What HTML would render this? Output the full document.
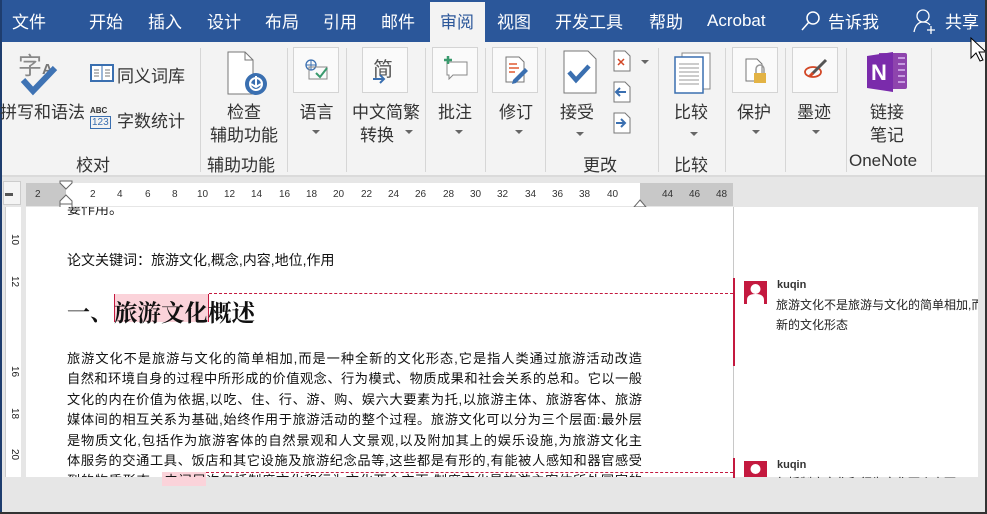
<!DOCTYPE html>
<html><head><meta charset="utf-8"><style>
*{margin:0;padding:0;box-sizing:border-box}
body{width:987px;height:514px;overflow:hidden;position:relative;background:#e6e6e6;font-family:"Liberation Sans","Noto Sans CJK SC",sans-serif;color:#222}
.a{position:absolute;white-space:nowrap}
.tab{position:absolute;top:8px;font-size:17px;color:#fff}
.rl{position:absolute;font-size:17px;color:#333;text-align:center}
.sep{position:absolute;top:48px;width:1px;height:124px;background:#d6d6d6}
.box{position:absolute;top:47px;width:46px;height:46px;border:1px solid #d4d4d4;background:#fafafa}
.dd{position:absolute;width:0;height:0;border-left:4px solid transparent;border-right:4px solid transparent;border-top:4px solid #666}
.gl{position:absolute;top:151px;font-size:17px;color:#333}
.ln{position:absolute;left:67px;width:575px;font-size:13.2px;text-align:justify;text-align-last:justify;white-space:nowrap;color:#111}
.rn{position:absolute;font-size:10px;color:#333}
</style></head><body>
<div class="a" style="left:0;top:0;width:987px;height:42px;background:#2b579a"></div>
<div class="a" style="left:0;top:0;width:2px;height:514px;background:#1e3d6e"></div>
<div class="a" style="left:430px;top:2px;width:55px;height:40px;background:#f3f3f3"></div>
<div class="tab" style="left:12px">文件</div>
<div class="tab" style="left:89px">开始</div>
<div class="tab" style="left:148px">插入</div>
<div class="tab" style="left:207px">设计</div>
<div class="tab" style="left:265px">布局</div>
<div class="tab" style="left:323px">引用</div>
<div class="tab" style="left:381px">邮件</div>
<div class="tab" style="left:440px;color:#2b579a">审阅</div>
<div class="tab" style="left:497px">视图</div>
<div class="tab" style="left:555px">开发工具</div>
<div class="tab" style="left:649px">帮助</div>
<div class="tab" style="left:707px;top:11px">Acrobat</div>
<svg class="a" style="left:800px;top:10px" width="22" height="22"><circle cx="13" cy="8" r="6" fill="none" stroke="#fff" stroke-width="1.5"/><line x1="9" y1="12" x2="2" y2="20" stroke="#fff" stroke-width="1.5"/></svg>
<div class="tab" style="left:828px">告诉我</div>
<svg class="a" style="left:913px;top:8px" width="24" height="26"><circle cx="10" cy="8" r="6" fill="none" stroke="#fff" stroke-width="1.3"/><path d="M1 24 Q3 14 10 14 Q15 14 17 17" fill="none" stroke="#fff" stroke-width="1.3"/><path d="M18 18v8M14 22h8" stroke="#fff" stroke-width="1.3"/></svg>
<div class="tab" style="left:945px">共享</div>
<div class="a" style="left:2px;top:42px;width:983px;height:134px;background:#f3f3f3"></div>
<div class="a" style="left:2px;top:175px;width:983px;height:2px;background:#dadada"></div>
<div class="a" style="left:18px;top:46px;font-size:24px;color:#888">字<span style="font-size:15px;font-weight:bold;color:#777">A</span></div>
<svg class="a" style="left:20px;top:64px" width="40" height="32"><path d="M3 16 L13 27 L35 4" fill="none" stroke="#3f73b4" stroke-width="6"/></svg>
<div class="a" style="left:0;top:98px;font-size:17px;color:#333">拼写和语法</div>
<svg class="a" style="left:90px;top:64px" width="24" height="18"><rect x="1" y="1" width="22" height="16" fill="#fff" stroke="#3a6fb0" stroke-width="2"/><line x1="12" y1="1" x2="12" y2="17" stroke="#3a6fb0"/><path d="M4 6h5M4 9h5M4 12h5M15 6h5M15 9h5M15 12h5" stroke="#777"/></svg>
<div class="a" style="left:117px;top:62px;font-size:17px;color:#333">同义词库</div>
<div class="a" style="left:90px;top:106px;font-size:8px;color:#333;font-weight:bold">ABC</div>
<div class="a" style="left:90px;top:116px;font-size:10px;color:#3a6fb0;border:1px solid #3a6fb0;line-height:11px;padding:0 1px">123</div>
<div class="a" style="left:117px;top:107px;font-size:17px;color:#333">字数统计</div>
<div class="gl" style="left:76px">校对</div>
<div class="sep" style="left:200px"></div>
<svg class="a" style="left:227px;top:51px" width="42" height="46"><path d="M1 1h17l8 8v34H1z" fill="#fff" stroke="#777"/><path d="M18 1v8h8" fill="none" stroke="#777"/><circle cx="29" cy="33" r="11" fill="#3a6fb0"/><circle cx="29" cy="33" r="6" fill="none" stroke="#fff" stroke-width="2"/><path d="M29 25v10M24 33l5 3 5-3" stroke="#fff" stroke-width="2" fill="none"/></svg>
<div class="rl" style="left:205px;top:98px;width:78px">检查</div>
<div class="rl" style="left:205px;top:121px;width:78px">辅助功能</div>
<div class="gl" style="left:207px">辅助功能</div>
<div class="sep" style="left:287px"></div>
<div class="box" style="left:293px"></div>
<svg class="a" style="left:305px;top:59px" width="24" height="22"><circle cx="6" cy="6" r="5" fill="none" stroke="#3a6fb0" stroke-width="1.3"/><path d="M1 6h10M6 1v10" stroke="#3a6fb0"/><rect x="4" y="8" width="18" height="12" fill="none" stroke="#888"/><path d="M11 14l4 4 7-9" stroke="#3a9a6e" stroke-width="2" fill="none"/></svg>
<div class="rl" style="left:288px;top:98px;width:57px">语言</div>
<div class="dd" style="left:312px;top:130px"></div>
<div class="sep" style="left:346px"></div>
<div class="box" style="left:362px"></div>
<div class="a" style="left:373px;top:53px;font-size:20px;color:#555">简</div>
<svg class="a" style="left:373px;top:74px" width="14" height="10"><path d="M0 5h11M7 1l4 4-4 4" stroke="#3a6fb0" stroke-width="2" fill="none"/></svg>
<div class="rl" style="left:348px;top:98px;width:76px">中文简繁</div>
<div class="rl" style="left:360px;top:121px">转换</div>
<div class="dd" style="left:405px;top:130px"></div>
<div class="sep" style="left:425px"></div>
<div class="box" style="left:432px"></div>
<svg class="a" style="left:443px;top:56px" width="26" height="24"><path d="M4 6h20v13H10l-4 4v-4H4z" fill="#fff" stroke="#888"/><path d="M5 0v8M1 4h8" stroke="#3a9a6e" stroke-width="2.5"/></svg>
<div class="rl" style="left:426px;top:98px;width:58px">批注</div>
<div class="dd" style="left:455px;top:130px"></div>
<div class="sep" style="left:485px"></div>
<div class="box" style="left:492px"></div>
<svg class="a" style="left:505px;top:56px" width="24" height="28"><path d="M1 1h13l5 5v20H1z" fill="#fff" stroke="#777"/><path d="M4 8h8M4 12h10M4 16h6" stroke="#e05a30" stroke-width="1.5"/><path d="M8 24l12-12 3 3-12 12-4 1z" fill="#3a6fb0"/></svg>
<div class="rl" style="left:487px;top:98px;width:58px">修订</div>
<div class="dd" style="left:515px;top:130px"></div>
<div class="sep" style="left:545px"></div>
<svg class="a" style="left:563px;top:50px" width="34" height="44"><path d="M1 1h24l8 8v34H1z" fill="#fff" stroke="#777"/><path d="M6 22l7 8 13-14" stroke="#3a6fb0" stroke-width="4.5" fill="none"/></svg>
<div class="rl" style="left:560px;top:98px">接受</div>
<div class="dd" style="left:576px;top:132px"></div>
<svg class="a" style="left:613px;top:50px" width="18" height="86"><path d="M1 1h11l5 5v15H1z" fill="#fff" stroke="#777"/><path d="M5 9l6 6M11 9l-6 6" stroke="#d24726" stroke-width="1.5"/><path d="M1 32h11l5 5v15H1z" fill="#fff" stroke="#777"/><path d="M13 42H4M7 38l-4 4 4 4" stroke="#3a6fb0" stroke-width="2" fill="none"/><path d="M1 63h11l5 5v15H1z" fill="#fff" stroke="#777"/><path d="M3 73h9M8 69l4 4-4 4" stroke="#3a6fb0" stroke-width="2" fill="none"/></svg>
<div class="dd" style="left:641px;top:60px"></div>
<div class="gl" style="left:583px">更改</div>
<div class="sep" style="left:658px"></div>
<svg class="a" style="left:674px;top:52px" width="38" height="42"><rect x="8" y="1" width="28" height="36" fill="#fff" stroke="#888"/><rect x="1" y="5" width="28" height="36" fill="#fff" stroke="#3a6fb0" stroke-width="1.5"/><path d="M5 12h20M5 16h20M5 20h20M5 24h20M5 28h20M5 32h20" stroke="#999"/></svg>
<div class="rl" style="left:674px;top:98px">比较</div>
<div class="dd" style="left:690px;top:132px"></div>
<div class="gl" style="left:674px">比较</div>
<div class="sep" style="left:725px"></div>
<div class="box" style="left:732px"></div>
<svg class="a" style="left:745px;top:58px" width="24" height="28"><path d="M1 1h11l5 5v17H1z" fill="#fff" stroke="#777"/><rect x="9" y="15" width="12" height="10" fill="#e3b345"/><path d="M11 15v-4a4 4 0 0 1 8 0v4" fill="none" stroke="#999" stroke-width="1.5"/></svg>
<div class="rl" style="left:737px;top:98px">保护</div>
<div class="dd" style="left:752px;top:130px"></div>
<div class="sep" style="left:785px"></div>
<div class="box" style="left:792px"></div>
<svg class="a" style="left:804px;top:58px" width="26" height="22"><ellipse cx="9" cy="14" rx="8" ry="5" fill="none" stroke="#d24726" stroke-width="1.8"/><path d="M8 16l14-14" stroke="#555" stroke-width="3"/><path d="M6 18l3-3" stroke="#d24726" stroke-width="3"/></svg>
<div class="rl" style="left:797px;top:98px">墨迹</div>
<div class="dd" style="left:812px;top:130px"></div>
<div class="sep" style="left:846px"></div>
<svg class="a" style="left:867px;top:50px" width="44" height="42"><path d="M12 3h26a2 2 0 0 1 2 2v32a2 2 0 0 1-2 2H12z" fill="#8e44ad"/><path d="M31 8h7M31 14h7M31 20h7M31 26h7M31 32h7" stroke="#c79ae0" stroke-width="2"/><path d="M0 6l26-4v40L0 38z" fill="#7a2bab"/><text x="4" y="30" font-family="Liberation Sans" font-weight="bold" font-size="22" fill="#fff">N</text></svg>
<div class="rl" style="left:870px;top:98px">链接</div>
<div class="rl" style="left:870px;top:121px">笔记</div>
<div class="gl" style="left:849px">OneNote</div>
<div class="sep" style="left:931px"></div>
<svg class="a" style="left:970px;top:37px" width="16" height="26"><path d="M1 1v20l5-5 4 8 3-1-4-8h7z" fill="#fff" stroke="#000"/></svg>
<div class="a" style="left:2px;top:177px;width:983px;height:30px;background:#e6e6e6"></div>
<div class="a" style="left:3px;top:181px;width:18px;height:24px;background:#f4f4f4;border:1px solid #ccc"></div>
<div class="a" style="left:5px;top:193px;width:8px;height:3px;background:#555"></div>
<div class="a" style="left:26px;top:183px;width:40px;height:23px;background:#c8c8c8"></div>
<div class="a" style="left:66px;top:183px;width:574px;height:23px;background:#fff"></div>
<div class="a" style="left:640px;top:183px;width:93px;height:23px;background:#c8c8c8"></div>
<svg class="a" style="left:59px;top:180px" width="14" height="32"><path d="M1 1h12v2l-6 6-6-6z" fill="#fff" stroke="#666"/><path d="M7 15l6 6v3H1v-3z" fill="#fff" stroke="#666"/><rect x="1" y="24" width="12" height="6" fill="#fff" stroke="#666"/></svg>
<svg class="a" style="left:633px;top:199px" width="14" height="10"><path d="M7 1l6 7H1z" fill="#fff" stroke="#666"/></svg>
<div class="rn" style="left:35px;top:189px">2</div>
<div class="rn" style="left:90px;top:189px">2</div>
<div class="rn" style="left:117px;top:189px">4</div>
<div class="rn" style="left:145px;top:189px">6</div>
<div class="rn" style="left:172px;top:189px">8</div>
<div class="rn" style="left:197px;top:189px">10</div>
<div class="rn" style="left:224px;top:189px">12</div>
<div class="rn" style="left:251px;top:189px">14</div>
<div class="rn" style="left:279px;top:189px">16</div>
<div class="rn" style="left:306px;top:189px">18</div>
<div class="rn" style="left:333px;top:189px">20</div>
<div class="rn" style="left:361px;top:189px">22</div>
<div class="rn" style="left:388px;top:189px">24</div>
<div class="rn" style="left:415px;top:189px">26</div>
<div class="rn" style="left:443px;top:189px">28</div>
<div class="rn" style="left:470px;top:189px">30</div>
<div class="rn" style="left:497px;top:189px">32</div>
<div class="rn" style="left:525px;top:189px">34</div>
<div class="rn" style="left:552px;top:189px">36</div>
<div class="rn" style="left:579px;top:189px">38</div>
<div class="rn" style="left:607px;top:189px">40</div>
<div class="rn" style="left:662px;top:189px">44</div>
<div class="rn" style="left:689px;top:189px">46</div>
<div class="rn" style="left:716px;top:189px">48</div>
<div class="a" style="left:2px;top:207px;width:22px;height:270px;background:#e6e6e6"></div>
<div class="a" style="left:5px;top:207px;width:16px;height:270px;background:#fff;border-left:1px solid #ccc"></div>
<div class="a" style="left:9px;top:234px;font-size:10px;transform:rotate(90deg)">10</div>
<div class="a" style="left:9px;top:276px;font-size:10px;transform:rotate(90deg)">12</div>
<div class="a" style="left:9px;top:366px;font-size:10px;transform:rotate(90deg)">16</div>
<div class="a" style="left:9px;top:408px;font-size:10px;transform:rotate(90deg)">18</div>
<div class="a" style="left:9px;top:449px;font-size:10px;transform:rotate(90deg)">20</div>
<div class="a" style="left:26px;top:207px;width:952px;height:270px;background:#fff"></div>
<div class="a" style="left:733px;top:207px;width:1px;height:270px;background:#c8c8c8"></div>
<div class="a" style="left:985px;top:0;width:2px;height:514px;background:#333"></div>
<div class="a" style="left:0;top:512px;width:987px;height:2px;background:#333"></div>
<div class="a" style="left:67px;top:207px;height:10px;overflow:hidden;font-size:14px"><div style="margin-top:-8px">要作用。</div></div>
<div class="a" style="left:67px;top:250px;font-size:14px;color:#111">论文关键词：旅游文化,概念,内容,地位,作用</div>
<div class="a" style="left:114px;top:294px;width:95px;height:28px;background:#fbd3da;border-left:1px solid #c4193f;border-right:1px solid #c4193f"></div>
<div class="a" style="left:67px;top:294px;font-size:23px;font-weight:bold;font-family:'Noto Serif CJK SC',serif;color:#111">一、</div>
<div class="a" style="left:114px;top:294px;font-size:23.5px;font-weight:bold;font-family:'Noto Serif CJK SC',serif;color:#111">旅游文化概述</div>
<div class="a" style="left:209px;top:293px;width:524px;border-top:1px dashed #c4193f"></div>
<div class="a" style="left:733px;top:278px;width:2px;height:88px;background:#c4193f"></div>
<div class="a" style="left:162px;top:472px;width:44px;height:14px;background:#fbd3da"></div>
<div class="a" style="left:206px;top:472px;width:527px;border-top:1px dashed #c4193f"></div>
<div class="a" style="left:733px;top:458px;width:2px;height:20px;background:#c4193f"></div>
<div class="ln" style="top:348px">旅游文化不是旅游与文化的简单相加,而是一种全新的文化形态,它是指人类通过旅游活动改造</div>
<div class="ln" style="top:368px">自然和环境自身的过程中所形成的价值观念、行为模式、物质成果和社会关系的总和。它以一般</div>
<div class="ln" style="top:389px">文化的内在价值为依据,以吃、住、行、游、购、娱六大要素为托,以旅游主体、旅游客体、旅游</div>
<div class="ln" style="top:409px">媒体间的相互关系为基础,始终作用于旅游活动的整个过程。旅游文化可以分为三个层面:最外层</div>
<div class="ln" style="top:430px">是物质文化,包括作为旅游客体的自然景观和人文景观,以及附加其上的娱乐设施,为旅游文化主</div>
<div class="ln" style="top:450px">体服务的交通工具、饭店和其它设施及旅游纪念品等,这些都是有形的,有能被人感知和器官感受</div>
<div class="a" style="left:67px;top:470px;width:575px;height:7px;overflow:hidden"><div class="ln" style="left:0;top:0">到的物质形态。中间层次包括制度文化和行为文化两个方面,制度文化是旅游主客体所处国家的</div></div>
<svg class="a" style="left:744px;top:281px" width="23" height="23"><rect width="23" height="23" fill="#c4193f"/><circle cx="11.5" cy="8" r="5" fill="#fff"/><path d="M3 23v-4q0-6 8.5-6t8.5 6v4z" fill="#fff"/></svg>
<div class="a" style="left:777px;top:279px;font-size:11px;font-weight:bold;color:#333">kuqin</div>
<div class="a" style="left:776px;top:296px;font-size:12px;color:#222">旅游文化不是旅游与文化的简单相加,而</div>
<div class="a" style="left:776px;top:316px;font-size:12px;color:#222">新的文化形态</div>
<svg class="a" style="left:744px;top:461px" width="23" height="16"><rect width="23" height="16" fill="#c4193f"/><circle cx="11.5" cy="8" r="5" fill="#fff"/></svg>
<div class="a" style="left:777px;top:459px;font-size:11px;font-weight:bold;color:#333">kuqin</div>
<div class="a" style="left:776px;top:476px;width:200px;height:2px;overflow:hidden;font-size:12px"><div style="margin-top:-2px">包括制度文化和行为文化两个方面</div></div>
<div class="a" style="left:978px;top:207px;width:7px;height:270px;background:#e6e6e6"></div>
</body></html>
